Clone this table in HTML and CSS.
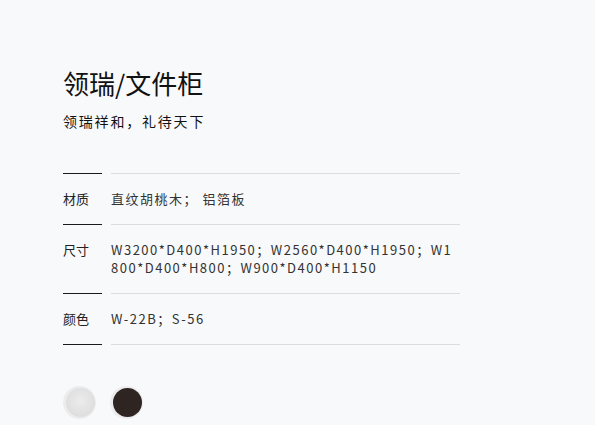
FILE: index.html
```html
<!DOCTYPE html>
<html lang="zh">
<head>
<meta charset="utf-8">
<link rel="stylesheet" href="styles.css">
</head>
<body>
<main class="product">
  <h1 class="title">领瑞/文件柜</h1>
  <p class="subtitle">领瑞祥和，礼待天下</p>
  <div class="specs">
    <div class="row">
      <div class="label">材质</div>
      <div class="value">直纹胡桃木； 铝箔板</div>
    </div>
    <div class="row">
      <div class="label">尺寸</div>
      <div class="value">W3200*D400*H1950；W2560*D400*H1950；W1800*D400*H800；W900*D400*H1150</div>
    </div>
    <div class="row last">
      <div class="label">颜色</div>
      <div class="value">W-22B；S-56</div>
    </div>
  </div>
  <div class="swatches">
    <span class="swatch light"><span class="dot"></span></span>
    <span class="swatch dark"><span class="dot"></span></span>
  </div>
</main>
</body>
</html>
```
FILE: styles.css
```css
html, body {
  margin: 0;
  padding: 0;
  background: #f8f9fb;
}
body {
  font-family: "Noto Sans CJK SC", "Noto Sans", sans-serif;
  color: #1a1a1a;
}
.product {
  width: 397px;
  padding: 63px 0 0 63px;
}
.title {
  margin: 0;
  font-size: 26px;
  font-weight: 400;
  line-height: 40px;
  color: #111;
}
.subtitle {
  margin: 8px 0 0;
  font-size: 14px;
  line-height: 20px;
  letter-spacing: 1.8px;
  color: #111;
}
.specs {
  margin-top: 42px;
}
.row {
  display: flex;
  gap: 9px;
  font-size: 13px;
  line-height: 18px;
  letter-spacing: 1.5px;
}
.label {
  width: 39px;
  flex: none;
  padding: 16px 0;
  border-top: 1px solid #1a1a1a;
  color: #222;
  letter-spacing: 0;
}
.value {
  flex: 1;
  padding: 16px 0;
  border-top: 1px solid #dcdcdf;
  color: #333;
  word-break: break-all;
}
.row.last .label { border-bottom: 1px solid #1a1a1a; }
.row.last .value { border-bottom: 1px solid #dcdcdf; }
.swatches {
  display: flex;
  gap: 14px;
  margin-top: 41px;
}
.swatch {
  width: 33px;
  height: 33px;
  border-radius: 50%;
  background: #ececec;
  display: flex;
  align-items: center;
  justify-content: center;
}
.swatch .dot {
  width: 29px;
  height: 29px;
  border-radius: 50%;
  margin-left: 2px;
}
.swatch.light .dot {
  background: radial-gradient(circle at 50% 45%, #ececec 0%, #dedede 70%, #e8e8e8 100%);
}
.swatch.dark .dot {
  background: #2e2522;
}
```
